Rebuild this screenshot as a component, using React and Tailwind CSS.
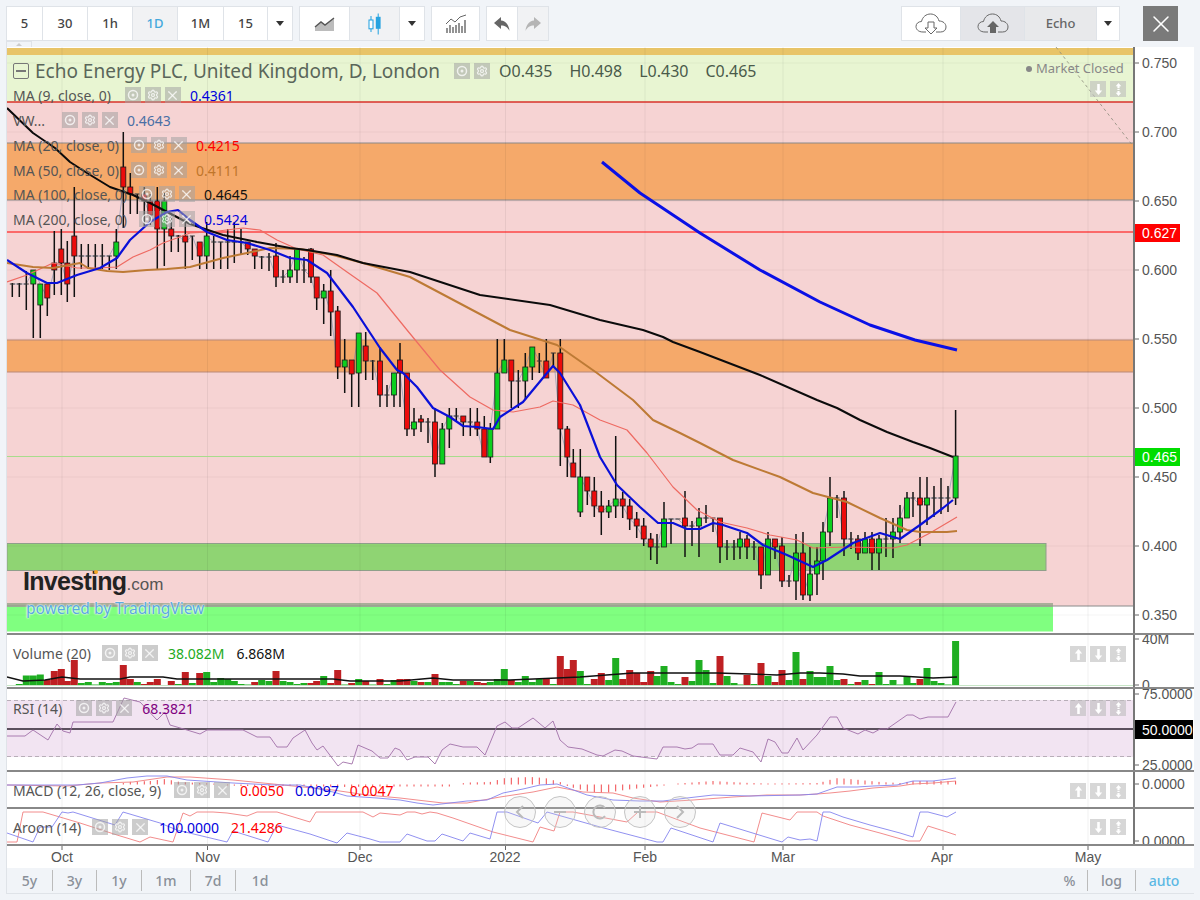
import { Settings, X } from 'lucide-react';

// candles: [x, high, bodyTop, bodyBottom, low, type] - type g / r / d (doji)
const CANDLES = [
  [12.3,283,284,284,297,'d'],[19.3,283,284,284,297,'d'],[26.3,271,284,284,310,'d'],[33.3,271,270,284,338,'g'],
  [40.3,284,284,305,338,'g'],[47.3,283,284,298,316,'r'],[54.3,231,263,270,295,'r'],[61.3,229,249,263,295,'r'],
  [67.3,241,263,284,302,'r'],[74.3,187,236,256,297,'r'],[81.3,244,256,256,269,'d'],[88.3,244,256,256,269,'d'],
  [95.3,244,256,256,269,'d'],[102.3,244,256,256,269,'d'],[109.3,256,256,256,270,'d'],[116.3,229,242,256,269,'g'],
  [123.3,132,167,187,228,'r'],[130.3,173,187,194,214,'r'],[137.3,194,194,194,214,'d'],[144.3,187,194,201,226,'r'],
  [150.3,194,201,215,225,'r'],[157.3,187,201,229,269,'r'],[164.3,193,201,229,266,'g'],[171.3,215,229,236,252,'r'],
  [178.3,235,236,236,252,'d'],[185.3,215,236,242,269,'r'],[192.3,236,236,236,260,'d'],[199.7,242,242,256,269,'r'],
  [206.7,222,236,256,269,'g'],[213.7,236,242,242,269,'d'],[220.7,242,242,242,269,'d'],[227.7,229,242,242,269,'d'],
  [234.3,222,242,242,263,'d'],[241,229,242,242,255,'d'],[247.7,242,242,249,255,'r'],[254.7,249,249,256,269,'r'],
  [261.7,256,257,257,269,'d'],[269,253,257,257,271,'d'],[276,243,256,277,287,'r'],[283,270,277,277,283,'d'],
  [290,256,270,277,283,'g'],[297,249,249,270,283,'g'],[304,257,270,270,283,'d'],[311,248,249,277,283,'r'],
  [316.7,277,277,298,310,'r'],[323.7,284,291,298,324,'g'],[330.7,270,291,312,336,'r'],[337.7,306,311,367,379,'r'],
  [344.7,339,360,367,393,'g'],[351.7,360,360,374,407,'r'],[358.7,333,333,373,407,'g'],[365.7,332,346,361,380,'r'],
  [372.7,360,361,361,380,'d'],[380,347,361,395,407,'r'],[387,385,395,395,407,'d'],[394,373,373,395,407,'g'],
  [400,343,360,373,407,'r'],[407,373,373,429,436,'r'],[414,408,422,429,436,'g'],[421,415,419,422,432,'r'],
  [428,418,422,422,443,'d'],[435,408,422,464,477,'r'],[442.3,423,429,464,464,'g'],[449.3,408,416,429,448,'g'],
  [456.3,408,416,416,422,'d'],[463.3,416,416,422,436,'r'],[470.3,408,422,422,436,'d'],[477.3,408,422,429,436,'r'],
  [484.3,416,429,457,457,'r'],[490.3,423,429,457,463,'g'],[497.3,339,373,429,429,'g'],[504.3,339,360,373,373,'g'],
  [511.3,360,360,381,408,'r'],[518.3,370,381,381,408,'d'],[525.3,353,367,381,400,'g'],[532.3,347,347,367,380,'g'],
  [539.3,353,361,361,373,'d'],[546.3,339,361,378,378,'r'],[553.3,353,353,353,367,'d'],[560.3,339,353,429,466,'r'],
  [567.3,426,429,457,477,'r'],[573.3,449,463,477,477,'r'],[580.3,449,477,512,517,'g'],[587.3,477,477,491,505,'r'],
  [594.3,477,491,506,517,'r'],[601.3,491,506,512,535,'r'],[608.7,500,506,512,518,'g'],[615.7,436,499,506,518,'g'],
  [622.7,492,499,506,518,'r'],[629.7,499,506,519,530,'r'],[636.7,512,519,526,538,'r'],[643.7,518,526,539,546,'r'],
  [650.7,533,539,547,560,'r'],[657,534,547,547,564,'d'],[664,502,519,547,547,'g'],[671,519,519,519,544,'d'],
  [678,519,519,519,519,'d'],[685,491,518,526,557,'r'],[692,521,526,526,546,'d'],[699,508,518,526,557,'g'],
  [706,505,518,518,523,'d'],[713,518,518,518,532,'d'],[720,518,518,547,563,'r'],[727,540,547,547,560,'d'],
  [734,540,547,547,560,'d'],[740,532,539,547,559,'g'],[747,535,539,547,559,'r'],[754,541,547,547,560,'d'],
  [761,547,547,575,589,'r'],[768,532,539,575,575,'g'],[775,539,539,547,559,'r'],[782,537,546,581,587,'r'],
  [789,575,581,581,587,'d'],[796,534,553,581,600,'g'],[803,532,553,595,600,'r'],[810,547,574,595,601,'g'],
  [817,547,561,574,595,'g'],[823,522,532,561,580,'g'],[830,477,498,532,546,'g'],[837,495,498,498,518,'d'],
  [844,491,498,539,556,'r'],[851,532,539,539,549,'d'],[858,535,539,553,560,'r'],[865,532,539,553,553,'g'],
  [872,532,539,553,570,'r'],[879,535,539,553,570,'g'],[886,518,539,539,557,'d'],[893,518,532,539,558,'g'],
  [900,505,518,532,543,'g'],[907,492,498,518,518,'g'],[913,492,498,498,517,'d'],[920,477,498,505,546,'r'],
  [927,477,498,505,525,'g'],[934,486,498,498,517,'d'],[941,478,498,498,514,'d'],[948,486,498,498,512,'d'],
  [955.6,410,456,498,505,'g'],
];

// volume per bar, red bars negative, aligned from the right end of CANDLES
const VOLUMES = [
  1,9.5,9.5,10.5,-5,-14,-16,-4,-25,2,3,0.5,3,2,3,-20,-6,3,-1,-3,-6,0,-4,1,-13,2,-12,13,3,7,6,4,1,0.5,-3,5,4,-14,4,3,1,2,-2,-4,9,-2,-15,0.5,-2,6,-4,0.5,-6,1,5,
  -6,-6,4,-3,3,-11,3,3,1,-4,4,-3,-2,3,6,16,-5,3,9,3,6,-6,1,-29,-16,-25,14,1,-6,-12,5,27,-6,-15,-12,-3,-14,9,19,3,1,-8,4,25,15,2,-29,9,2,0.5,-10,1,-22,9,-3,-15,5,33,
  -6,14,8,8,19,5,-6,1,-3,5,-1,13,1,5,0.5,8,2,-6,17,4,2,0.5,44,
];

const MA100 = [[7,108],[33,133],[55,148],[70,162],[87,173],[110,187],[133,195],[150,203],[173,215],[190,224],[223,235],[257,242],[290,248],[307,250],[337,255],[363,263],[410,272],[480,295],[550,305],[600,320],[643,330],[663,337],[673,342],[700,352],[760,375],[817,400],[837,408],[860,420],[887,432],[913,442],[930,448],[953,457]];
const MA50 = [[7,263],[33,267],[53,268],[80,263],[88,268],[107,271],[123,272],[147,270],[167,269],[190,267],[223,258],[247,253],[270,248],[300,249],[333,255],[363,263],[410,277],[510,330],[557,345],[597,373],[633,400],[653,420],[680,433],[700,443],[733,460],[780,477],[813,493],[847,502],[880,518],[907,530],[920,532],[947,532],[957,531]];
const MA20 = [[7,282],[27,275],[53,263],[77,268],[97,268],[117,267],[133,257],[150,250],[163,243],[177,238],[190,233],[210,232],[243,228],[260,230],[277,240],[297,249],[323,255],[347,272],[377,293],[407,330],[440,370],[470,397],[493,410],[513,412],[540,407],[553,401],[573,405],[600,420],[627,430],[647,453],[673,487],[697,510],[720,522],[747,528],[770,535],[797,540],[813,548],[847,547],[893,548],[907,545],[930,533],[957,517]];
const MA9 = [[7,260],[27,273],[47,283],[57,283],[77,275],[100,268],[117,258],[130,240],[150,222],[167,212],[178,210],[190,220],[207,232],[227,240],[247,243],[270,250],[290,258],[307,260],[327,273],[353,307],[380,348],[397,370],[403,373],[417,387],[433,408],[450,417],[463,426],[477,427],[493,429],[500,417],[523,402],[547,373],[553,366],[560,373],[580,405],[600,457],[617,485],[640,507],[658,523],[673,523],[687,529],[700,529],[713,523],[723,525],[747,533],[763,545],[787,555],[813,567],[827,560],[853,543],[880,533],[900,539],[920,525],[943,508],[953,500]];
const TREND = [[602,162],[640,193],[700,233],[760,270],[820,302],[870,325],[915,340],[957,350]];
const VOL_MA = [[7,677],[23,681],[45,680],[62,677],[80,679],[120,679],[130,677],[163,677],[177,679],[333,679],[350,681],[400,681],[433,678],[453,680],[510,680],[557,678],[580,677],[633,673],[717,673],[750,674],[777,675],[800,673],[820,673],[843,674],[860,676],[900,676],[917,677],[933,678],[957,677]];
const RSI = [[7,736],[25,736],[33,730],[48,740],[57,724],[63,731],[70,733],[73,722],[113,722],[124,698],[140,702],[157,720],[165,712],[170,725],[187,730],[200,734],[207,730],[243,730],[257,737],[270,737],[277,747],[287,747],[293,738],[305,730],[312,743],[317,750],[323,746],[338,766],[343,762],[352,764],[358,745],[372,751],[380,758],[388,758],[395,748],[400,750],[407,760],[415,757],[428,757],[435,764],[442,750],[450,744],[463,747],[477,747],[485,755],[490,743],[497,726],[505,722],[512,728],[518,728],[533,718],[545,728],[553,721],[560,740],[568,747],[582,749],[597,755],[603,756],[615,750],[622,751],[633,756],[657,759],[663,747],[677,747],[685,749],[692,748],[698,744],[713,744],[720,755],[733,755],[740,748],[753,752],[761,762],[768,739],[775,742],[782,753],[788,753],[797,738],[803,750],[817,735],[830,717],[837,717],[843,728],[858,734],[865,730],[873,733],[880,729],[887,729],[907,715],[913,715],[920,719],[928,717],[948,717],[956,702]];
const MACD_BLUE = [[7,785],[77,785],[100,783],[127,778],[147,776],[167,776],[187,780],[233,783],[273,785],[300,785],[333,792],[347,796],[377,798],[400,800],[417,803],[433,805],[467,801],[487,800],[503,793],[523,789],[540,785],[557,784],[587,795],[613,800],[640,801],[663,801],[687,798],[713,795],[750,796],[800,795],[817,794],[837,787],[857,787],[873,786],[897,785],[913,781],[933,781],[956,778]];
const MACD_RED = [[7,785],[67,786],[100,783],[133,782],[167,777],[190,777],[233,780],[283,785],[333,790],[367,795],[400,798],[417,800],[443,803],[467,803],[500,797],[533,792],[557,787],[583,792],[613,793],[633,798],[660,802],[693,800],[733,797],[767,795],[800,795],[817,794],[830,793],[850,791],[873,788],[900,786],[913,784],[933,783],[956,781]];
const HIST = [[7,0],[120,0],[127,2],[150,3],[165,5],[180,2],[200,1],[240,-1],[300,-1],[340,-2],[380,-1.5],[450,-1.5],[455,0],[470,1.5],[490,2],[505,6],[530,7],[545,6],[560,2],[570,-2],[590,-7],[605,-8],[625,-5],[650,-2],[670,0],[685,1],[713,3],[730,2],[750,1],[770,0.5],[820,1],[825,3],[838,6],[860,4],[880,2],[900,1],[913,3],[957,3]];
const AROON_RED = [[7,842],[17,842],[23,812],[43,812],[80,823],[117,835],[140,842],[150,837],[173,842],[183,813],[190,816],[197,812],[213,812],[227,813],[247,816],[257,812],[277,812],[310,822],[316,812],[363,812],[373,817],[380,813],[400,815],[407,812],[415,812],[422,814],[430,812],[437,813],[453,818],[493,832],[533,842],[540,827],[554,831],[560,812],[573,812],[627,822],[638,812],[657,812],[700,828],[754,842],[762,813],[790,820],[797,812],[817,812],[823,816],[850,825],[880,833],[908,841],[920,841],[928,826],[947,832],[956,835]];
const AROON_BLUE = [[7,833],[33,842],[40,827],[52,827],[62,812],[68,813],[73,812],[115,825],[123,812],[160,823],[177,830],[227,842],[233,831],[268,842],[277,825],[310,834],[337,843],[347,833],[370,839],[380,842],[400,842],[407,834],[427,841],[435,841],[442,834],[463,841],[470,833],[490,839],[497,812],[507,812],[538,823],[547,812],[600,827],[657,842],[663,842],[671,828],[713,842],[720,823],[782,842],[788,837],[800,840],[810,839],[817,841],[823,812],[830,812],[843,817],[870,825],[900,833],[913,837],[920,812],[928,812],[947,817],[956,812]];

const pts = (list) => list.map((p) => p.join(',')).join(' ');

const closeOf = (c) => (c[5] === 'g' ? c[2] : c[3]);

function histAt(x) {
  for (let i = 1; i < HIST.length; i++) {
    if (x <= HIST[i][0]) {
      const [x0, y0] = HIST[i - 1];
      const [x1, y1] = HIST[i];
      return y0 + ((y1 - y0) * (x - x0)) / (x1 - x0);
    }
  }
  return 0;
}

const GRID_X = [62, 207.5, 360, 505.5, 645, 783, 943, 1088];
const GRID_Y = [63, 132, 201, 270, 339, 408, 477, 546, 615];

function VGrid({ y1, y2 }) {
  return GRID_X.map((x) => <line key={x} x1={x} x2={x} y1={y1} y2={y2} stroke="#000" strokeOpacity="0.06" />);
}

function MainChart() {
  return (
    <svg viewBox="7 47 1126 586" className="block w-[1126px] h-[586px]">
      <rect x="7" y="47" width="1126" height="586" fill="#fff" />
      <rect x="7" y="102" width="1126" height="504" fill="#f6d3d3" />
      <rect x="7" y="48" width="1126" height="7" fill="#e8c468" />
      <rect x="7" y="55" width="1126" height="47" fill="#e8f5d2" />
      <rect x="7" y="143" width="1126" height="57" fill="#f5a96a" />
      <rect x="7" y="340" width="1126" height="32" fill="#f5a96a" />
      <line x1="7" x2="1133" y1="143" y2="143" stroke="#8a8a8a" strokeWidth="1.2" />
      <line x1="7" x2="1133" y1="200" y2="200" stroke="#8a8a8a" strokeWidth="1.2" />
      <line x1="7" x2="1133" y1="340" y2="340" stroke="#b98a78" strokeWidth="1.2" />
      <line x1="7" x2="1133" y1="372" y2="372" stroke="#b98a78" strokeWidth="1.2" />
      <rect x="7" y="543.5" width="1039" height="27" fill="#8fd473" stroke="#8f9f8a" />
      <line x1="7" x2="1133" y1="606" y2="606" stroke="#8a8a8a" />
      <rect x="7" y="607" width="1046" height="24.5" fill="#80ff80" />
      <rect x="7" y="603" width="1046" height="4" fill="#8fa085" fillOpacity="0.75" />
      <VGrid y1={47} y2={633} />
      {GRID_Y.map((y) => <line key={y} x1="7" x2="1133" y1={y} y2={y} stroke="#000" strokeOpacity="0.04" />)}
      <line x1="7" x2="1133" y1="102" y2="102" stroke="#d8322a" strokeWidth="1.6" />
      <line x1="7" x2="1133" y1="232" y2="232" stroke="#f00" strokeWidth="1.2" />
      <line x1="7" x2="1133" y1="456.5" y2="456.5" stroke="#a8dc8c" strokeWidth="1.2" />
      <line x1="1056" y1="47" x2="1133" y2="146" stroke="#8a8a7a" strokeWidth="0.8" strokeDasharray="3 3" />
      <polyline points={pts(CANDLES.map((c) => [c[0], closeOf(c)]))} fill="none" stroke="#7d8fb0" strokeOpacity="0.7" strokeWidth="0.9" />
      {CANDLES.map((c, i) => {
        const [x, hi, top, bot, lo, t] = c;
        return (
          <g key={i}>
            <line x1={x} x2={x} y1={hi} y2={lo} stroke="#111" strokeWidth="1.5" />
            {t === 'd' ? (
              <line x1={x - 2.5} x2={x + 2.5} y1={top} y2={top} stroke="#333" strokeWidth="1" />
            ) : (
              <rect x={x - 2.5} y={top} width="5" height={bot - top} fill={t === 'g' ? '#0ccf1f' : '#ec0b0b'} stroke="#1b1b1b" strokeWidth="0.8" />
            )}
          </g>
        );
      })}
      <polyline points={pts(MA20)} fill="none" stroke="#ee6a62" strokeWidth="1.2" strokeLinejoin="round" />
      <polyline points={pts(MA50)} fill="none" stroke="#bd7a35" strokeWidth="2" strokeLinejoin="round" />
      <polyline points={pts(MA100)} fill="none" stroke="#0b0b0b" strokeWidth="2" strokeLinejoin="round" />
      <polyline points={pts(MA9)} fill="none" stroke="#0a10d8" strokeWidth="2.2" strokeLinejoin="round" />
      <polyline points={pts(TREND)} fill="none" stroke="#0a10e6" strokeWidth="3" strokeLinejoin="round" />
    </svg>
  );
}

function VolumeChart() {
  const offset = CANDLES.length - VOLUMES.length;
  return (
    <svg viewBox="7 635 1126 52" className="block w-[1126px] h-[52px]">
      <rect x="7" y="635" width="1126" height="52" fill="#fff" />
      <VGrid y1={635} y2={687} />
      {VOLUMES.map((v, i) => {
        const c = CANDLES[i + offset];
        if (!c || v === 0) return null;
        const h = Math.abs(v);
        return <rect key={i} x={c[0] - 3.5} y={685 - h} width="7" height={h} fill={v > 0 ? '#1fae22' : '#bf2023'} />;
      })}
      <line x1="7" x2="1133" y1="685.5" y2="685.5" stroke="#8fce8f" strokeOpacity="0.5" />
      <polyline points={pts(VOL_MA)} fill="none" stroke="#111" strokeWidth="1.3" strokeLinejoin="round" />
    </svg>
  );
}

function RsiChart() {
  return (
    <svg viewBox="7 689 1126 81" className="block w-[1126px] h-[81px]">
      <rect x="7" y="689" width="1126" height="81" fill="#fff" />
      <rect x="7" y="700" width="1126" height="57" fill="#f2e4f2" />
      <VGrid y1={689} y2={770} />
      <line x1="7" x2="1133" y1="700.5" y2="700.5" stroke="#b8aeb8" strokeDasharray="4 3" />
      <line x1="7" x2="1133" y1="756.5" y2="756.5" stroke="#b8aeb8" strokeDasharray="4 3" />
      <line x1="7" x2="1133" y1="729" y2="729" stroke="#2a1f2c" strokeWidth="1.5" />
      <polyline points={pts(RSI)} fill="none" stroke="#a06fa8" strokeWidth="0.9" />
    </svg>
  );
}

function MacdChart() {
  return (
    <svg viewBox="7 772 1126 35" className="block w-[1126px] h-[35px]">
      <rect x="7" y="772" width="1126" height="35" fill="#fff" />
      <VGrid y1={772} y2={807} />
      {CANDLES.map((c, i) => {
        const h = histAt(c[0]);
        if (Math.abs(h) < 0.3) return null;
        return <line key={i} x1={c[0]} x2={c[0]} y1={784.5} y2={784.5 - h - (h > 0 ? 0.5 : -0.5)} stroke="#f0484c" strokeWidth="1" />;
      })}
      <polyline points={pts(MACD_RED)} fill="none" stroke="#f08080" strokeWidth="0.9" />
      <polyline points={pts(MACD_BLUE)} fill="none" stroke="#8585ee" strokeWidth="0.9" />
    </svg>
  );
}

function AroonChart() {
  return (
    <svg viewBox="7 809 1126 35" className="block w-[1126px] h-[35px]">
      <rect x="7" y="809" width="1126" height="35" fill="#fff" />
      <VGrid y1={809} y2={844} />
      <polyline points={pts(AROON_RED)} fill="none" stroke="#f08080" strokeWidth="0.9" />
      <polyline points={pts(AROON_BLUE)} fill="none" stroke="#8585ee" strokeWidth="0.9" />
    </svg>
  );
}

// right hand scale, page y coordinates again
function Scale({ y, h, ticks, children }) {
  return (
    <div className="w-[60px] bg-white border-l-2 border-[#777] shrink-0">
      <svg viewBox={`1135 ${y} 58 ${h}`} className="block w-[58px]" style={{ height: h }}>
        {ticks.map(([label, ty]) => (
          <g key={label}>
            <line x1="1135" x2="1139" y1={ty} y2={ty} stroke="#666" />
            <text x="1142" y={ty + 5} fill="#555" fontSize="14" fontFamily="'Liberation Sans', sans-serif">{label}</text>
          </g>
        ))}
        {children}
      </svg>
    </div>
  );
}

function Tag({ y, label, fill, w = 45 }) {
  return (
    <g>
      <rect x="1135" y={y} width={w} height="18" fill={fill} />
      <text x="1142" y={y + 14} fill="#fff" fontSize="14" fontFamily="'Liberation Sans', sans-serif">{label}</text>
    </g>
  );
}

function EyeBtn() {
  return (
    <span className="w-[16px] h-[16px] bg-[#a3a3a3]/55 flex items-center justify-center">
      <svg viewBox="0 0 12 12" className="w-[12px] h-[12px]" fill="none" stroke="#fff" strokeOpacity="0.75" strokeWidth="1.5">
        <circle cx="6" cy="6" r="4.5" />
        <circle cx="6" cy="6" r="1.5" fill="#fff" fillOpacity="0.75" stroke="none" />
      </svg>
    </span>
  );
}

function GearBtn() {
  return (
    <span className="w-[16px] h-[16px] bg-[#a3a3a3]/55 flex items-center justify-center">
      <Settings size={12} color="#fff" strokeOpacity={0.75} strokeWidth={2.5} />
    </span>
  );
}

function CloseBtn() {
  return (
    <span className="w-[16px] h-[16px] bg-[#a3a3a3]/55 flex items-center justify-center">
      <X size={15} color="#fff" strokeOpacity={0.75} strokeWidth={2} />
    </span>
  );
}

function Btns({ className = '', close = true }) {
  return (
    <span className={`flex gap-[4px] ${className}`}>
      <EyeBtn />
      <GearBtn />
      {close && <CloseBtn />}
    </span>
  );
}

function ArrowBtn({ kind }) {
  return (
    <span className="w-[16px] h-[16px] bg-[#bdbdbd]/60 flex items-center justify-center">
      <svg viewBox="0 0 12 14" className="w-[11px] h-[13px]" fill="#fff">
        {kind === 'up' && <path d="M6 1 L10 6 L7.4 6 L7.4 13 L4.6 13 L4.6 6 L2 6 Z" />}
        {kind === 'down' && <path d="M6 13 L10 8 L7.4 8 L7.4 1 L4.6 1 L4.6 8 L2 8 Z" />}
        {kind === 'both' && <path d="M6 0 L9 3.5 L7.2 3.5 L7.2 5.5 L4.8 5.5 L4.8 3.5 L3 3.5 Z M6 14 L9 10.5 L7.2 10.5 L7.2 8.5 L4.8 8.5 L4.8 10.5 L3 10.5 Z M4.8 6.4 H7.2 V7.6 H4.8 Z" />}
      </svg>
    </span>
  );
}

function PaneArrows({ className, up = true }) {
  return (
    <div className={`absolute flex gap-[4px] ${className}`}>
      {up && <ArrowBtn kind="up" />}
      <ArrowBtn kind="down" />
      <ArrowBtn kind="both" />
    </div>
  );
}

function Cell({ children, className = '', w }) {
  return <div className={`h-full flex items-center justify-center border-r border-[#dfe3e8] last:border-r-0 ${w} ${className}`}>{children}</div>;
}

function Caret() {
  return <span className="w-0 h-0 border-l-[4px] border-r-[4px] border-t-[5px] border-l-transparent border-r-transparent border-t-[#333]" />;
}

function Cloud({ up }) {
  return (
    <svg viewBox="0 0 32 24" className="w-[32px] h-[24px]" fill="none" stroke="#666" strokeWidth="1">
      <path d="M8 20 C3 20 1 17 1 14.5 C1 11.5 3.5 9.5 6.5 9.5 C7.5 5 11 2 15.5 2 C20 2 23 5 24 9 C28 9 31 11.5 31 15 C31 18 29 20 25.5 20 H21" />
      <path d="M11 20 H8" />
      {up ? (
        <path d="M16 9 L22 15 L19 15 L19 21 L13 21 L13 15 L10 15 Z" fill="#666" stroke="none" />
      ) : (
        <path d="M13 10 H19 V16 H22 L16 22 L10 16 H13 Z" fill="#fff" />
      )}
    </svg>
  );
}

function Toolbar() {
  return (
    <div className="h-[47px] pl-[6px] pt-[6px] flex items-start relative">
      <div className="h-[35px] flex bg-white border border-[#dfe3e8] text-[13px] font-medium text-[#444]">
        <Cell w="w-[36px]">5</Cell>
        <Cell w="w-[45px]">30</Cell>
        <Cell w="w-[45px]">1h</Cell>
        <Cell w="w-[45px]" className="bg-[#f1f2f4] text-[#45a8dc]">1D</Cell>
        <Cell w="w-[46px]">1M</Cell>
        <Cell w="w-[44px]">15</Cell>
        <Cell w="w-[24px]"><Caret /></Cell>
      </div>
      <div className="h-[35px] ml-[6px] flex bg-white border border-[#dfe3e8]">
        <Cell w="w-[50px]">
          <svg viewBox="0 0 22 16" className="w-[22px] h-[16px]">
            <path d="M1 15 V11 L7 6 L11 9 L20 2 V15 Z" fill="#bcbcbc" />
            <path d="M1 11 L7 6 L11 9 L20 2" fill="none" stroke="#555" strokeWidth="1.4" />
          </svg>
        </Cell>
        <Cell w="w-[50px]" className="bg-[#f1f2f4]">
          <svg viewBox="0 0 20 28" className="w-[16px] h-[24px]">
            <path d="M5 4 V24" stroke="#27a3e0" strokeWidth="1.3" />
            <rect x="2.5" y="9" width="5" height="11" fill="#fff" stroke="#27a3e0" strokeWidth="1.3" />
            <path d="M14 1 V27" stroke="#27a3e0" strokeWidth="1.3" />
            <rect x="11" y="5" width="6" height="15" fill="#27a3e0" />
          </svg>
        </Cell>
        <Cell w="w-[24px]"><Caret /></Cell>
      </div>
      <div className="h-[35px] ml-[6px] w-[49px] flex items-center justify-center bg-white border border-[#dfe3e8]">
        <svg viewBox="0 0 22 20" className="w-[22px] h-[20px]" fill="none" stroke="#666">
          <path d="M1 10 L6 5 L10 8 L15 3 L21 1" strokeWidth="1" />
          <path d="M2 19 V14 M5 19 V11 M8 19 V13 M11 19 V11 M14 19 V9 M17 19 V12 M20 19 V6" strokeWidth="1.4" />
        </svg>
      </div>
      <div className="h-[35px] ml-[6px] flex bg-white border border-[#dfe3e8]">
        <Cell w="w-[31px]">
          <svg viewBox="0 0 18 16" className="w-[18px] h-[16px]"><path d="M8 1 L1 7 L8 13 V9.5 C12 9.5 14.5 11 16.5 15 C16 9 13 5 8 4.5 Z" fill="#666" /></svg>
        </Cell>
        <Cell w="w-[30px]" className="bg-[#f1f2f4]">
          <svg viewBox="0 0 18 16" className="w-[18px] h-[16px]"><path d="M10 1 L17 7 L10 13 V9.5 C6 9.5 3.5 11 1.5 15 C2 9 5 5 10 4.5 Z" fill="#b5b5b5" /></svg>
        </Cell>
      </div>
      <div className="h-[35px] absolute left-[901px] top-[6px] flex bg-white border border-[#dfe3e8]">
        <Cell w="w-[59px]"><Cloud /></Cell>
        <Cell w="w-[64px]" className="bg-[#e4e5e9]"><Cloud up /></Cell>
        <Cell w="w-[72px]" className="bg-[#e8e9eb] text-[13px] font-medium text-[#666]">Echo</Cell>
        <Cell w="w-[22px]"><Caret /></Cell>
      </div>
      <div className="absolute left-[1143px] top-[6px] w-[35px] h-[35px] bg-[#7a7a7a] flex items-center justify-center">
        <X size={28} color="#fff" strokeWidth={1.3} />
      </div>
      <div className="absolute left-[6px] top-[41px] w-[26px] h-[7px] border border-[#dfe3e8] flex justify-center">
        <span className="w-0 h-0 mt-[1px] border-l-[3px] border-r-[3px] border-b-[3px] border-l-transparent border-r-transparent border-b-[#ccc]" />
      </div>
    </div>
  );
}

function NavOverlay() {
  const items = [
    { k: 'prev', d: 'M3 -6 L-3 0 L3 6' },
    { k: 'minus', d: 'M-6 0 H6' },
    { k: 'reset', d: 'M5 -4 A6.5 6.5 0 1 0 5 4' },
    { k: 'plus', d: 'M-6 0 H6 M0 -6 V6' },
    { k: 'next', d: 'M-3 -6 L3 0 L-3 6' },
  ];
  return (
    <div className="absolute left-[504px] top-[796px] flex gap-[8px]">
      {items.map((it) => (
        <svg key={it.k} viewBox="-16 -16 32 32" className="w-[32px] h-[32px]">
          <circle r="15.5" fill="#d9d9d9" fillOpacity="0.2" stroke="#c4c4c4" />
          <path d={it.d} fill="none" stroke="#bbb" strokeWidth="2" />
        </svg>
      ))}
    </div>
  );
}

export default function App() {
  const label = "absolute flex items-center h-[18px] text-[14px] text-[#555] whitespace-nowrap";
  return (
    <div className="relative w-[1200px] h-[900px] overflow-hidden bg-[#f1f4f8] font-['Noto_Sans',sans-serif]">
      <Toolbar />
      <div className="ml-[6px] w-[1188px] border-l border-[#dfe3e8] bg-white">
        <div className="flex border-b-2 border-[#888] relative">
          <MainChart />
          <Scale y={47} h={586} ticks={[['0.750',63],['0.700',132],['0.650',201],['0.600',270],['0.550',339],['0.500',408],['0.450',477],['0.400',546],['0.350',615]]}>
            <Tag y={224} label="0.627" fill="#f00" />
            <Tag y={448} label="0.465" fill="#00dd00" />
          </Scale>
        </div>
        <div className="flex border-b-2 border-[#888]">
          <VolumeChart />
          <Scale y={635} h={52} ticks={[['40M',639],['0',685]]} />
        </div>
        <div className="flex border-b-2 border-[#888]">
          <RsiChart />
          <Scale y={689} h={81} ticks={[['75.0000',694],['25.0000',765]]}>
            <rect x="1135" y="720" width="58" height="19" fill="#000" />
            <text x="1142" y="735" fill="#fff" fontSize="14" fontFamily="'Liberation Sans', sans-serif">50.0000</text>
          </Scale>
        </div>
        <div className="flex border-b-2 border-[#888]">
          <MacdChart />
          <Scale y={772} h={35} ticks={[['0.0000',784]]} />
        </div>
        <div className="flex border-b-2 border-[#888]">
          <AroonChart />
          <Scale y={809} h={35} ticks={[['0.0000',841]]} />
        </div>
        <div className="relative h-[22px] flex bg-white text-[14px] text-[#555] font-['Liberation_Sans',sans-serif]">
          <svg viewBox="7 846 1126 22" className="block w-[1126px] h-[22px]">
            {GRID_X.map((x) => <line key={x} x1={x} x2={x} y1="846" y2="850" stroke="#666" />)}
            {[['Oct',62],['Nov',207.5],['Dec',360],['2022',505],['Feb',645],['Mar',783],['Apr',942],['May',1088]].map(([t, x]) => (
              <text key={t} x={x} y="862" textAnchor="middle" fill="#555" fontSize="14">{t}</text>
            ))}
          </svg>
        </div>
      </div>
      <div className="ml-[6px] w-[1188px] h-[26px] border-l border-b border-[#dfe3e8] flex items-center justify-between text-[14px] font-medium text-[#8a9099]">
        <div className="flex items-center h-[16px]">
          <span className="w-[46px] text-center border-r border-[#bbb]">5y</span>
          <span className="w-[44px] text-center border-r border-[#bbb]">3y</span>
          <span className="w-[45px] text-center border-r border-[#bbb]">1y</span>
          <span className="w-[49px] text-center border-r border-[#bbb]">1m</span>
          <span className="w-[45px] text-center border-r border-[#bbb]">7d</span>
          <span className="w-[48px] text-center">1d</span>
        </div>
        <div className="flex items-center h-[16px] pr-[2px]">
          <span className="w-[36px] text-center border-r border-[#bbb]">%</span>
          <span className="w-[48px] text-center border-r border-[#bbb]">log</span>
          <span className="w-[56px] text-center text-[#5cb8e4]">auto</span>
        </div>
      </div>

      {/* legend on top of the chart */}
      <div className="absolute left-[13px] top-[63px] w-[16px] h-[16px] rounded-[2px] border border-[#777] flex items-center justify-center">
        <span className="w-[10px] h-[1.5px] bg-[#777]" />
      </div>
      <div className="absolute left-[35px] top-[57px] text-[19px] leading-[28px] text-[#5a665a] whitespace-nowrap">Echo Energy PLC, United Kingdom, D, London</div>
      <Btns className="absolute left-[454px] top-[63px]" close={false} />
      <div className="absolute left-[499px] top-[60px] flex gap-[17px] text-[16px] leading-[22px] text-[#4a5a4a] whitespace-nowrap">
        <span>O0.435</span><span>H0.498</span><span>L0.430</span><span>C0.465</span>
      </div>
      <div className="absolute left-[1026px] top-[59px] flex items-center gap-[4px] h-[20px] text-[13px] text-[#888] whitespace-nowrap">
        <span className="w-[6px] h-[6px] rounded-full bg-[#888]" />Market Closed
      </div>
      <div className="absolute left-[1090px] top-[81px] flex gap-[4px]">
        <ArrowBtn kind="down" />
        <ArrowBtn kind="both" />
      </div>

      <div className={`${label} left-[13px] top-[86px]`}>MA (9, close, 0)<Btns className="ml-[14px]" /><span className="ml-[9px] text-[#0000dd]">0.4361</span></div>
      <div className={`${label} left-[13px] top-[111px]`}>VW...<Btns className="ml-[17px]" /><span className="ml-[9px] text-[#4a6fa5]">0.4643</span></div>
      <div className={`${label} left-[13px] top-[136px]`}>MA (20, close, 0)<Btns className="ml-[12px]" /><span className="ml-[9px] text-[#f00]">0.4215</span></div>
      <div className={`${label} left-[13px] top-[161px]`}>MA (50, close, 0)<Btns className="ml-[12px]" /><span className="ml-[9px] text-[#c0762a]">0.4111</span></div>
      <div className={`${label} left-[13px] top-[185px]`}>MA (100, close, 0)<Btns className="ml-[12px]" /><span className="ml-[9px] text-[#111]">0.4645</span></div>
      <div className={`${label} left-[13px] top-[210px]`}>MA (200, close, 0)<Btns className="ml-[12px]" /><span className="ml-[9px] text-[#0000dd]">0.5424</span></div>

      <div className="absolute left-[23px] top-[565px] flex items-baseline whitespace-nowrap font-['Liberation_Sans',sans-serif]">
        <span className="text-[25px] leading-[32px] font-bold tracking-[-0.7px] text-[#222]">Investing</span>
        <span className="text-[17px] leading-[32px] text-[#555]">.com</span>
      </div>
      <span className="absolute left-[94px] top-[570px] w-[4px] h-[4px] rounded-full bg-[#f5a623]" />
      <div className="absolute left-[26px] top-[597px] text-[15.5px] leading-[22px] text-[#5aaadf] whitespace-nowrap [text-shadow:0_0_2px_#fff,0_0_2px_#fff]">powered by TradingView</div>

      <div className={`${label} left-[13px] top-[644px]`}>Volume (20)<Btns className="ml-[11px]" /><span className="ml-[10px] text-[#22aa22]">38.082M</span><span className="ml-[12px] text-[#111]">6.868M</span></div>
      <div className={`${label} left-[13px] top-[699px]`}>RSI (14)<Btns className="ml-[14px]" /><span className="ml-[10px] text-[#800080]">68.3821</span></div>
      <div className={`${label} left-[13px] top-[781px]`}>MACD (12, 26, close, 9)<Btns className="ml-[13px]" /><span className="ml-[10px] text-[#f00]">0.0050</span><span className="ml-[11px] text-[#0000dd]">0.0097</span><span className="ml-[11px] text-[#f00]">0.0047</span></div>
      <div className={`${label} left-[13px] top-[818px]`}>Aroon (14)<Btns className="ml-[11px]" /><span className="ml-[11px] text-[#0000dd]">100.0000</span><span className="ml-[12px] text-[#f00]">21.4286</span></div>

      <PaneArrows className="left-[1070px] top-[646px]" />
      <PaneArrows className="left-[1070px] top-[700px]" />
      <PaneArrows className="left-[1070px] top-[783px]" />
      <PaneArrows className="left-[1090px] top-[819px]" up={false} />
      <NavOverlay />
    </div>
  );
}
